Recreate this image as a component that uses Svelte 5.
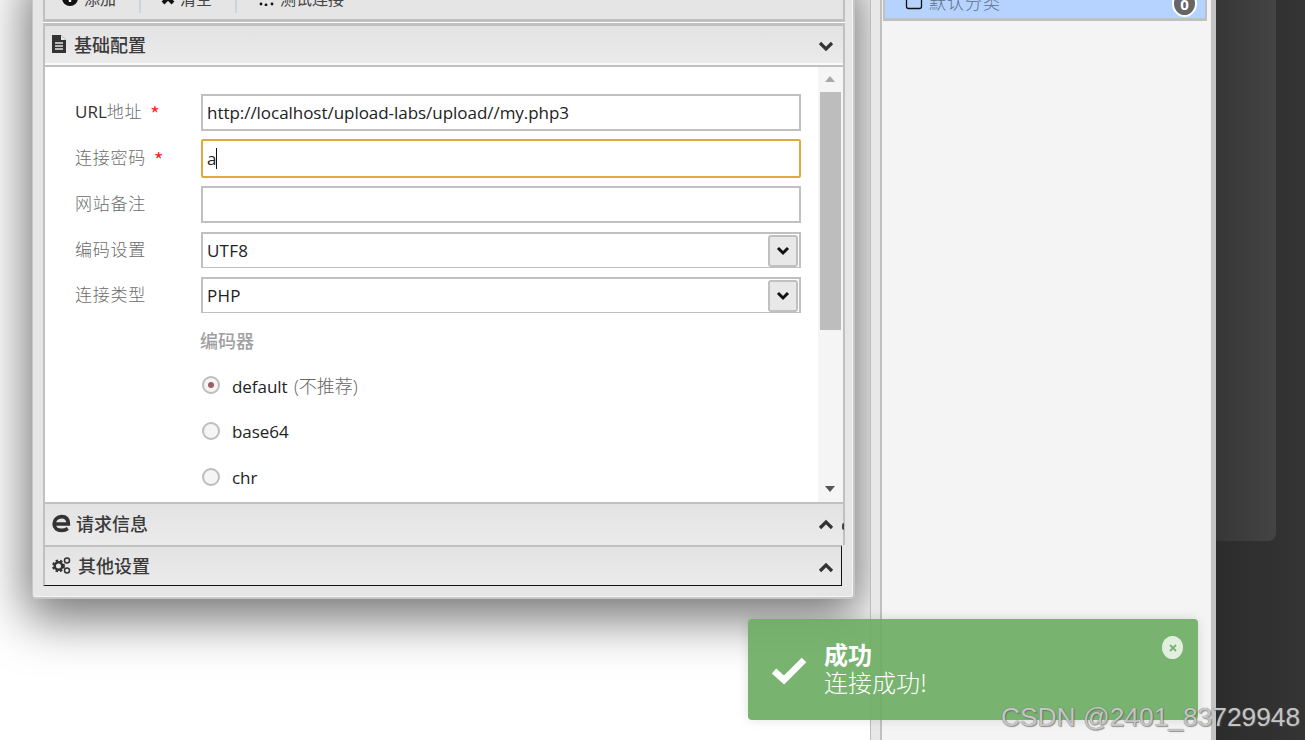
<script>
	const fields = [
		{ latin: 'URL', label: '地址', required: true, value: 'http://localhost/upload-labs/upload//my.php3' },
		{ label: '连接密码', required: true, value: 'a', focused: true },
		{ label: '网站备注', value: '' },
	];
	const selects = [
		{ label: '编码设置', value: 'UTF8' },
		{ label: '连接类型', value: 'PHP' },
	];
	const encoders = [
		{ name: 'default', note: '(不推荐)', checked: true },
		{ name: 'base64' },
		{ name: 'chr' },
	];
</script>

<div class="stage">
	<section class="workspace">
		<div class="window">
			<div class="toolbar">
				<span class="tool">
					<svg width="16" height="16" viewBox="0 0 16 16"><circle cx="8" cy="8" r="8" fill="#111" /><path d="M8 4v8M4 8h8" stroke="#fff" stroke-width="2.4" /></svg>
					添加
				</span>
				<span class="tool">
					<svg width="16" height="16" viewBox="0 0 16 16"><path d="M3 3l10 10M13 3L3 13" stroke="#111" stroke-width="4" /></svg>
					清空
				</span>
				<span class="tool last">
					<svg width="16" height="16" viewBox="0 0 16 16" fill="#111"><circle cx="8" cy="4" r="1.4" /><circle cx="3" cy="14" r="1.4" /><circle cx="8" cy="15" r="1.4" /><circle cx="14" cy="14" r="1.4" /></svg>
					测试连接
				</span>
			</div>

			<header class="bar first">
				<svg class="bar-icon" width="16" height="18" viewBox="0 0 16 18">
					<path d="M1 0h9l5 5v13H1z" fill="#333" />
					<path d="M10 0l5 5h-5z" fill="#e6e6e6" />
					<path d="M4 8h8M4 11h8M4 14h8" stroke="#e6e6e6" stroke-width="1.5" />
				</svg>
				<span class="bar-title">基础配置</span>
				<svg class="chevron" width="16" height="11" viewBox="0 0 16 11"><path d="M2 2l6 6 6-6" fill="none" stroke="#333" stroke-width="3.2" /></svg>
			</header>

			<div class="body">
				<div class="form">
					{#each fields as field}
						<div class="row">
							<span class="label">{#if field.latin}<u>{field.latin}</u>{/if}{field.label}{#if field.required}<i>*</i>{/if}</span>
							<div class="input" class:focused={field.focused}>
								{field.value}{#if field.focused}<b class="caret"></b>{/if}
							</div>
						</div>
					{/each}
					{#each selects as select}
						<div class="row select-row">
							<span class="label">{select.label}</span>
							<div class="input select">
								{select.value}
								<span class="select-btn">
									<svg width="14" height="10" viewBox="0 0 14 10"><path d="M2 2l5 5 5-5" fill="none" stroke="#111" stroke-width="3" /></svg>
								</span>
							</div>
						</div>
					{/each}
					<div class="group-title">编码器</div>
					{#each encoders as encoder}
						<div class="radio-row">
							<span class="radio" class:checked={encoder.checked}></span>
							<span class="radio-text">{encoder.name}{#if encoder.note}&nbsp;<em>{encoder.note}</em>{/if}</span>
						</div>
					{/each}
				</div>
				<div class="scrollbar">
					<span class="arrow up"></span>
					<span class="thumb"></span>
					<span class="arrow down"></span>
				</div>
			</div>

			<header class="bar second">
				<svg class="bar-icon edge" width="19" height="19" viewBox="0 0 18 18">
					<path d="M2 9.500h13.500C15.500 5 13 2.500 9 2.500S2 5.500 2 9.500s3 6 7 6c2.500 0 4.500-.7 6-1.800" fill="none" stroke="#333" stroke-width="3.400" />
				</svg>
				<span class="bar-title">请求信息</span>
				<svg class="chevron" width="16" height="11" viewBox="0 0 16 11"><path d="M2 9l6-6 6 6" fill="none" stroke="#333" stroke-width="3.2" /></svg>
				<span class="clipped"></span>
			</header>
			<header class="bar third">
				<svg class="bar-icon gears" width="19" height="17" viewBox="0 0 19 17">
					<circle cx="6.500" cy="9" r="3.800" fill="none" stroke="#333" stroke-width="2.600" />
					<circle cx="6.500" cy="9" r="5.400" fill="none" stroke="#333" stroke-width="2" stroke-dasharray="2.400 2" />
					<circle cx="15" cy="3.500" r="2.500" fill="none" stroke="#333" stroke-width="1.500" />
					<circle cx="15" cy="13.500" r="2.500" fill="none" stroke="#333" stroke-width="1.500" />
				</svg>
				<span class="bar-title">其他设置</span>
				<svg class="chevron" width="16" height="11" viewBox="0 0 16 11"><path d="M2 9l6-6 6 6" fill="none" stroke="#333" stroke-width="3.2" /></svg>
			</header>
		</div>
	</section>

	<aside class="side">
		<div class="tree-row">
			<svg width="18" height="12" viewBox="0 0 18 12"><path d="M1.500 0v8.500a2 2 0 0 0 2 2h11a2 2 0 0 0 2-2V0" fill="none" stroke="#111" stroke-width="1.300" /></svg>
			<span class="tree-name">默认分类</span>
			<span class="badge">0</span>
		</div>
	</aside>

	<div class="desk">
		<div class="desk-card"></div>
	</div>

	<div class="toast">
		<svg class="toast-check" width="38" height="30" viewBox="0 0 38 30"><path d="M4 16l10 9L34 5" fill="none" stroke="#fff" stroke-width="6.500" /></svg>
		<div class="toast-text">
			<strong>成功</strong>
			<span>连接成功!</span>
		</div>
		<span class="toast-close">
			<svg width="8" height="8" viewBox="0 0 8 8"><path d="M1 1l6 6M7 1L1 7" stroke="#78b272" stroke-width="1.800" /></svg>
		</span>
	</div>

	<div class="watermark">CSDN @2401_83729948</div>
</div>

<style>
	:global(body) {
		margin: 0;
		background: #fff;
	}

	.stage {
		position: relative;
		display: flex;
		width: 1305px;
		height: 740px;
		overflow: hidden;
		font-family: 'Open Sans', 'Noto Sans CJK SC', sans-serif;
		color: #222;
	}

	.workspace {
		position: relative;
		width: 870px;
		flex-shrink: 0;
		overflow: hidden;
		background: #fff;
	}

	/* free floating dialog, its top is scrolled off the screen */
	.window {
		position: absolute;
		left: 32px;
		top: -30px;
		width: 823px;
		height: 629px;
		box-sizing: border-box;
		padding: 0 8px 0 10px;
		background: #e6e6e6;
		border: 1px solid #c6c6c6;
		border-width: 0 2px 2px 1px;
		border-radius: 0 0 4px 4px;
		box-shadow: inset -1px -1px 0 #f6f6f6, 0 14px 50px 6px rgba(0, 0, 0, 0.55);
	}

	.toolbar {
		display: flex;
		align-items: center;
		height: 52px;
		box-sizing: border-box;
		padding-top: 7px;
		padding-left: 16px;
		border: 2px solid #c0c0c0;
		border-width: 0 2px 3px;
		background: #e5e5e5;
		box-shadow: 0 1px 0 #fff;
		font-size: 16px;
		font-family: 'Noto Sans CJK SC', sans-serif;
		color: #444;
	}

	.tool {
		display: flex;
		align-items: center;
		gap: 6px;
		width: 80px;
		height: 30px;
		box-sizing: border-box;
		padding-left: 1px;
		border-right: 2px solid #c9d6df;
	}

	.tool:nth-child(2) {
		padding-left: 19px;
		width: 96px;
		gap: 4px;
	}

	.tool:nth-child(3) {
		padding-left: 21px;
	}

	.tool.last {
		width: auto;
		border: 0;
	}

	.bar {
		position: relative;
		display: flex;
		align-items: center;
		box-sizing: border-box;
		border: 2px solid #c0c0c0;
		background: linear-gradient(#e3e3e3, #ebebeb);
		padding-left: 6px;
	}

	.bar.first {
		height: 42px;
		margin-top: 1px;
		border-width: 3px 2px 0;
		box-shadow: inset 0 -2px 0 #fafafa;
		padding-bottom: 4px;
	}

	.bar.second {
		height: 43px;
		border-width: 2px 2px 0;
		padding-bottom: 3px;
	}

	.bar.third {
		height: 41px;
		border-width: 2px 1px 1px 2px;
		border-right-color: #111;
		border-bottom-color: #111;
		margin-right: 3px;
		padding-bottom: 2px;
	}

	.bar-icon {
		flex-shrink: 0;
		margin-right: 7px;
	}

	.bar-icon.edge {
		margin-left: 1px;
		margin-right: 5px;
	}

	.bar-icon.gears {
		margin-left: 1px;
		margin-right: 7px;
	}

	.bar-title {
		font-family: 'Noto Sans CJK SC', sans-serif;
		font-size: 18px;
		font-weight: 500;
		color: #3a3a3a;
	}

	.chevron {
		position: absolute;
		right: 9px;
		top: 15px;
	}

	.third .chevron {
		right: 7px;
	}

	.clipped {
		position: absolute;
		right: -1px;
		top: 19px;
		width: 2px;
		height: 7px;
		border-radius: 2px 0 0 2px;
		background: #444;
	}

	.body {
		display: flex;
		height: 437px;
		box-sizing: border-box;
		border-top: 2px solid #c0c0c0;
		border-left: 2px solid #c0c0c0;
		border-right: 2px solid #c0c0c0;
		background: #fff;
		overflow: hidden;
	}

	.form {
		flex: 1;
		padding: 27px 17px 0 30px;
		min-width: 0;
	}

	.row {
		display: flex;
		align-items: center;
		height: 37px;
		margin-bottom: 8px;
	}

	.row:nth-child(2) {
		height: 39px;
		margin-bottom: 8px;
	}

	.row:nth-child(3) {
		margin-bottom: 9px;
	}

	.select-row {
		height: 36px;
		margin-bottom: 9px;
	}

	.label {
		width: 126px;
		flex-shrink: 0;
		margin-bottom: 4px;
		font-size: 17px;
		color: #6c6c6c;
		font-family: 'Noto Sans CJK SC', sans-serif;
		font-weight: 300;
		letter-spacing: 0.75px;
	}

	.label u {
		text-decoration: none;
		font-family: 'Open Sans', sans-serif;
		font-weight: 400;
		letter-spacing: 0;
		color: #333;
	}

	.label i {
		position: relative;
		top: 4px;
		margin-left: 8px;
		color: #f22;
		font-style: normal;
		font-size: 20px;
		font-weight: 400;
		line-height: 1;
	}

	.input {
		position: relative;
		display: flex;
		align-items: center;
		flex: 1;
		height: 100%;
		box-sizing: border-box;
		padding-left: 4px;
		border: 2px solid #c0c0c0;
		font-size: 17px;
		letter-spacing: -0.04px;
		color: #222;
		background: #fff;
		white-space: nowrap;
	}

	.input.focused {
		border-color: #e0a93f;
		border-radius: 2px;
	}

	.caret {
		display: block;
		width: 1px;
		height: 21px;
		background: #111;
	}

	.select {
		border-bottom-width: 1px;
		letter-spacing: 0.2px;
	}

	.select-btn {
		position: absolute;
		right: 1px;
		top: 1px;
		bottom: 0;
		display: flex;
		align-items: center;
		justify-content: center;
		width: 30px;
		box-sizing: border-box;
		border: 2px solid #c0c0c0;
		border-radius: 3px;
		background: #e8e8e8;
	}

	.group-title {
		margin: 17px 0 25px 125px;
		font-family: 'Noto Sans CJK SC', sans-serif;
		font-size: 18px;
		font-weight: 500;
		line-height: 20px;
		color: #a0a0a0;
	}

	.radio-row {
		display: flex;
		align-items: center;
		gap: 12px;
		height: 46px;
		margin-left: 127px;
		margin-top: -13px;
		margin-bottom: 13px;
	}

	.radio {
		position: relative;
		width: 18px;
		height: 18px;
		box-sizing: border-box;
		border: 2px solid #bdbdbd;
		border-radius: 50%;
		background: #f5f5f5;
	}

	.radio.checked::after {
		content: '';
		position: absolute;
		left: 4px;
		top: 4px;
		width: 6px;
		height: 6px;
		border-radius: 50%;
		background: #9a5f63;
	}

	.radio-text {
		font-size: 17px;
		letter-spacing: -0.04px;
	}

	.radio-text em {
		margin-left: 2px;
		font-style: normal;
		font-size: 18px;
		font-weight: 300;
		color: #666;
	}

	.scrollbar {
		position: relative;
		display: flex;
		flex-direction: column;
		align-items: center;
		width: 25px;
		flex-shrink: 0;
		background: #f5f5f5;
	}

	.thumb {
		position: absolute;
		left: 2px;
		top: 25px;
		width: 21px;
		height: 238px;
		background: #bdbdbd;
	}

	.arrow {
		position: absolute;
		left: 7px;
		width: 0;
		height: 0;
		border-left: 5px solid transparent;
		border-right: 5px solid transparent;
	}

	.arrow.up {
		top: 9px;
		border-bottom: 6px solid #a8a8a8;
	}

	.arrow.down {
		bottom: 10px;
		border-top: 6px solid #555;
	}

	.side {
		position: relative;
		display: flex;
		flex-direction: column;
		width: 346px;
		flex-shrink: 0;
		box-sizing: border-box;
		padding: 0 4px 0 3px;
		background: #f4f4f4;
		border-left: 10px solid #e8e8e8;
		border-right: 5px solid #c4c4c4;
		box-shadow: inset 2px 0 0 #c0c0c0;
	}

	.side::before {
		content: '';
		position: absolute;
		left: -10px;
		top: 0;
		bottom: 0;
		width: 1px;
		background: #bcbcbc;
	}

	.tree-row {
		position: relative;
		display: flex;
		align-items: flex-start;
		gap: 6px;
		height: 21px;
		box-sizing: border-box;
		padding-left: 20px;
		background: #b6d3ff;
		border: 2px solid #c0c0c0;
		border-top: 0;
		border-bottom-width: 3px;
	}

	.tree-row svg {
		margin-top: -2px;
	}

	.tree-name {
		margin-top: -11px;
		font-family: 'Noto Sans CJK SC', sans-serif;
		font-size: 17px;
		font-weight: 300;
		letter-spacing: 1px;
		color: #5f6f85;
	}

	.badge {
		position: absolute;
		right: 8px;
		top: -10px;
		display: flex;
		align-items: center;
		justify-content: center;
		width: 25px;
		height: 27px;
		box-sizing: border-box;
		border: 2px solid #fff;
		border-radius: 50%;
		background: #666;
		color: #fff;
		font-size: 15px;
		font-weight: 700;
	}

	.desk {
		flex: 1;
		background: linear-gradient(90deg, #2c2c2c, #343434);
	}

	.desk-card {
		width: 60px;
		height: 541px;
		border-radius: 0 0 8px 0;
		background: linear-gradient(90deg, #363636, #444);
	}

	/* toast sits over everything in the bottom right */
	.toast {
		position: absolute;
		left: 748px;
		top: 619px;
		display: flex;
		align-items: center;
		width: 450px;
		height: 101px;
		box-sizing: border-box;
		padding: 0 0 0 22px;
		border-radius: 4px;
		background: rgba(108, 172, 100, 0.92);
		box-shadow: 0 0 12px rgba(0, 0, 0, 0.12);
		color: #fff;
		font-family: 'Noto Sans CJK SC', sans-serif;
	}

	.toast-check {
		flex-shrink: 0;
		margin-right: 16px;
	}

	.toast-text {
		display: flex;
		flex-direction: column;
		margin-top: -4px;
		font-size: 24px;
		line-height: 28px;
		font-weight: 300;
	}

	.toast-text strong {
		font-weight: 700;
	}

	.toast-close {
		position: absolute;
		right: 15px;
		top: 17px;
		display: flex;
		align-items: center;
		justify-content: center;
		width: 21px;
		height: 23px;
		border-radius: 50%;
		background: #e2efdf;
	}

	.watermark {
		position: absolute;
		left: 1001px;
		top: 702px;
		font-family: 'Liberation Sans', sans-serif;
		font-size: 26.35px;
		line-height: 30px;
		white-space: nowrap;
		color: rgba(215, 215, 215, 0.85);
		text-shadow: 0 0 1px #666, 1px 1px 1px rgba(90, 90, 90, 0.6);
	}
</style>
